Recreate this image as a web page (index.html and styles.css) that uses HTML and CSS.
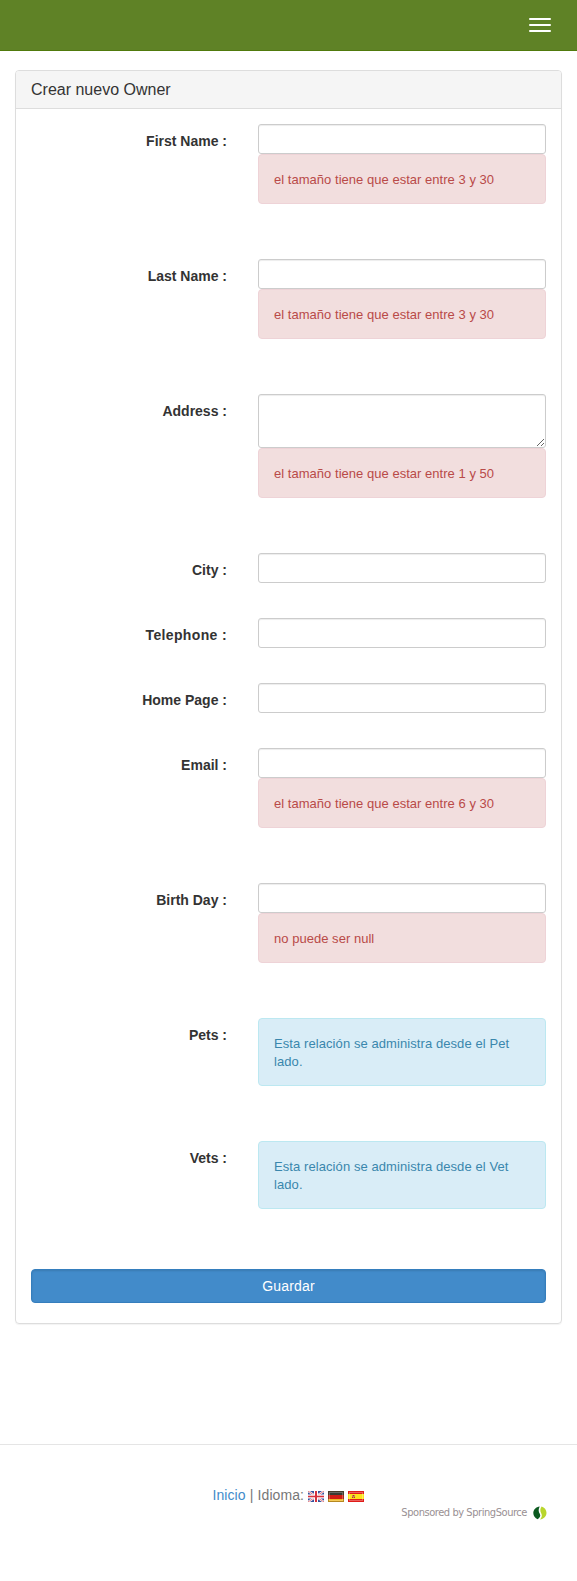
FILE: index.html
```html
<!DOCTYPE html>
<html lang="es">
<head>
<meta charset="utf-8">
<title>Crear nuevo Owner</title>
<link rel="stylesheet" href="styles.css">
</head>
<body>
<nav class="navbar">
  <button class="navbar-toggle" aria-label="Menu"><span class="bar"></span><span class="bar"></span><span class="bar"></span></button>
</nav>
<main class="panel">
  <h3 class="panel-heading">Crear nuevo Owner</h3>
  <form class="panel-body">
    <div class="row"><label class="label">First Name :</label><div class="field"><input class="control"><div class="alert danger">el tamaño tiene que estar entre 3 y 30</div></div></div>
    <div class="row"><label class="label">Last Name :</label><div class="field"><input class="control"><div class="alert danger">el tamaño tiene que estar entre 3 y 30</div></div></div>
    <div class="row"><label class="label">Address :</label><div class="field"><textarea class="control area"></textarea><div class="alert danger">el tamaño tiene que estar entre 1 y 50</div></div></div>
    <div class="row"><label class="label">City :</label><div class="field"><input class="control"></div></div>
    <div class="row"><label class="label wide">Telephone :</label><div class="field"><input class="control"></div></div>
    <div class="row"><label class="label">Home Page :</label><div class="field"><input class="control"></div></div>
    <div class="row"><label class="label">Email :</label><div class="field"><input class="control"><div class="alert danger">el tamaño tiene que estar entre 6 y 30</div></div></div>
    <div class="row"><label class="label">Birth Day :</label><div class="field"><input class="control"><div class="alert danger">no puede ser null</div></div></div>
    <div class="row"><label class="label">Pets :</label><div class="field"><div class="alert info">Esta relación se administra desde el Pet lado.</div></div></div>
    <div class="row last"><label class="label">Vets :</label><div class="field"><div class="alert info">Esta relación se administra desde el Vet lado.</div></div></div>
    <button class="submit" type="button">Guardar</button>
  </form>
</main>
<footer class="footer">
  <div class="links">
    <a class="link" href="#">Inicio</a> | Idioma:
    <svg class="flag" viewBox="0 0 16 11"><rect width="16" height="11" fill="#35509c"/><path d="M0 0L16 11M16 0L0 11" stroke="#fff" stroke-width="2.2"/><path d="M0 0L16 11M16 0L0 11" stroke="#d8525c" stroke-width=".8"/><path d="M8 0V11M0 5.5H16" stroke="#fff" stroke-width="4"/><path d="M8 0V11" stroke="#d6303c" stroke-width="2"/><path d="M0 5.5H16" stroke="#d6303c" stroke-width="1.6"/></svg>
    <svg class="flag" viewBox="0 0 16 11"><rect width="16" height="4" fill="#3a3a32"/><rect y="4" width="16" height="4" fill="#d01c14"/><rect y="8" width="16" height="3" fill="#f0b820"/><rect x="1.5" y="1.5" width="13" height="8" fill="none" stroke="#fff" stroke-opacity=".25"/><rect x=".5" y=".5" width="15" height="10" fill="none" stroke="#604020" stroke-opacity=".4"/></svg>
    <svg class="flag" viewBox="0 0 16 11"><rect width="16" height="11" fill="#e01c18"/><rect y="3" width="16" height="5" fill="#fbe41c"/><rect x="1.5" y="1.5" width="13" height="8" fill="none" stroke="#fff" stroke-opacity=".3"/><path d="M4 4h3v3H4z" fill="#c88a50"/><path d="M5 4h1v1H5zM4 6h1v1H4zM6 6h1v1H6z" fill="#c02c24"/></svg>
  </div>
  <div class="sponsor"><span class="sponsor-text">Sponsored by SpringSource</span>
    <svg class="leaf" viewBox="0 0 14 14"><path d="M6.700.4C3 .8.300 3.500.300 7c0 3 1.800 5.200 4.400 6.300C6.800 11.800 7.900 10 6.900 8 5.300 5.500 5.300 3 6.700.4z" fill="#0c5a20"/><path d="M8.600.5c2.800.8 4.900 3.300 4.900 6.300 0 3.600-2.700 6.300-6.500 6.700C8.700 11.700 9.500 9.700 8.200 7.300 6.800 4.700 7.200 2.500 8.600.5z" fill="#b9d62c"/></svg>
  </div>
</footer>
</body>
</html>
```
FILE: styles.css
```css
* { box-sizing: border-box; }
body { margin: 0; background: #fff; color: #333; font: 14px/20px "Liberation Sans", Arial, sans-serif; }
.navbar { height: 51px; background: #5f8226; border-bottom: 1px solid #507a0c; display: flex; justify-content: flex-end; padding: 8px 16px; }
.navbar-toggle { width: 42px; height: 34px; padding: 10px; border: 0; background: none; display: flex; flex-direction: column; gap: 4px; }
.bar { width: 22px; height: 2px; border-radius: 1px; background: #fff; }
.panel { margin: 19px 15px 0; border: 1px solid #ddd; border-radius: 4px; box-shadow: 0 1px 1px rgba(0,0,0,.05); }
.panel-heading { margin: 0; height: 38px; padding: 10px 15px; background: #f5f5f5; border-bottom: 1px solid #ddd; border-radius: 3px 3px 0 0; font-size: 16px; font-weight: 400; line-height: 17px; }
.panel-body { padding: 15px 15px 20px; }
.row { display: flex; gap: 30px; margin-bottom: 35px; }
.row.last { margin-bottom: 0; }
.label { width: 197px; padding: 7px 1px 0 0; text-align: right; font-weight: 700; }
.label.wide { letter-spacing: .36px; }
.field { width: 288px; }
.control { display: block; width: 100%; height: 30px; padding: 5px 10px; border: 1px solid #ccc; border-radius: 3px; background: #fff; box-shadow: inset 0 1px 1px rgba(0,0,0,.075); font: 12px/18px "Liberation Sans", Arial, sans-serif; }
.area { height: 54px; resize: vertical; }
.alert { margin-bottom: 20px; padding: 16px 15px 14px; border: 1px solid; border-radius: 4px; font-size: 13px; line-height: 18px; }
.danger { background: #f2dede; border-color: #eed3d7; color: #b94a48; letter-spacing: .03px; }
.info { background: #d9edf7; border-color: #bce8f1; color: #3a87ad; letter-spacing: .08px; }
.submit { display: block; width: 100%; height: 34px; margin-top: 40px; border: 1px solid #357ebd; border-radius: 4px; background: #428bca; box-shadow: inset 0 1px 2px rgba(0,0,0,.12); color: #fff; font: 14px/20px "Liberation Sans", Arial, sans-serif; letter-spacing: .15px; }
.footer { margin-top: 120px; border-top: 1px solid #e5e5e5; padding: 40px 30px 0; color: #777; }
.links { text-align: center; height: 21px; letter-spacing: .06px; word-spacing: .2px; }
.link { color: #428bca; text-decoration: none; }
.flag { width: 16px; height: 11px; vertical-align: -2px; }
.sponsor { display: flex; justify-content: flex-end; align-items: center; gap: 6px; height: 14px; color: #999093; font: 11px/14px "DejaVu Sans Condensed", "DejaVu Sans", sans-serif; letter-spacing: -.44px; }
.sponsor-text { white-space: nowrap; }
.leaf { width: 14px; height: 14px; }
```
